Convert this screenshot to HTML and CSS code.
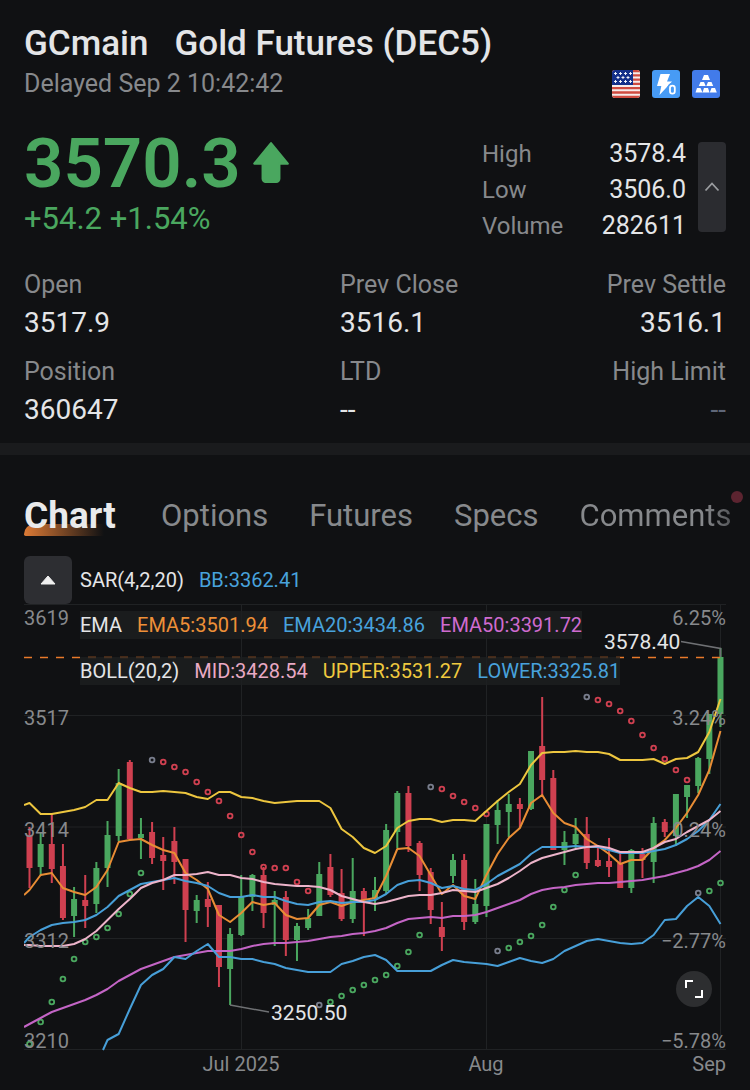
FILE: index.html
```html
<!DOCTYPE html>
<html lang="en">
<head>
<meta charset="utf-8">
<meta name="viewport" content="width=device-width, initial-scale=1">
<title>GCmain Gold Futures</title>
<link rel="stylesheet" href="styles.css">
</head>
<body>
<header class="quote">
  <h1 class="title"><span>GCmain</span><span>Gold Futures (DEC5)</span></h1>
  <div class="subline">
    <span>Delayed Sep 2 10:42:42</span>
    <div class="badges">
      <svg class="badge" viewBox="0 0 28 28" aria-label="United States">
        <clipPath id="flagclip"><rect width="28" height="28" rx="3"/></clipPath>
        <g clip-path="url(#flagclip)">
          <rect width="28" height="28" fill="#f6eceb"/>
          <path d="M0 1h28M0 5.3h28M0 9.6h28M0 13.9h28M0 18.2h28M0 22.5h28M0 26.8h28" stroke="#cf4b40" stroke-width="2.3"/>
          <rect width="21" height="15" fill="#14308a"/>
          <path d="M2 3.5h3M7 3.5h3M12 3.5h3M17 3.5h3M4.500 7.500h3M9.500 7.500h3M14.500 7.500h3M2 11.500h3M7 11.500h3M12 11.500h3M17 11.500h3M3.500 2v3M8.500 2v3M13.500 2v3M18.500 2v3M6 6v3M11 6v3M16 6v3M3.500 10v3M8.500 10v3M13.500 10v3M18.500 10v3" stroke="#fff" stroke-width=".9"/>
        </g>
      </svg>
      <svg class="badge" viewBox="0 0 28 28" aria-label="Level 0">
        <rect width="28" height="28" rx="3" fill="#479bf5"/>
        <path d="M8.500 4H18l-3 7.500h5L7.500 25l1.800-9H5z" fill="#fff"/>
        <rect x="17.700" y="15.500" width="5.200" height="8.400" rx="2.600" fill="#479bf5" stroke="#479bf5" stroke-width="5"/>
        <rect x="18" y="15.700" width="4.800" height="8" rx="2.400" fill="none" stroke="#fff" stroke-width="1.800"/>
      </svg>
      <svg class="badge" viewBox="0 0 28 28" aria-label="Gold">
        <rect width="28" height="28" rx="3" fill="#427bea"/>
        <path d="M12 5h4l2 5h-8zM8.500 12h3.500l1.700 4H6.800zM16 12h3.500l1.700 4h-6.900zM5 18h3.500l2 4.500H3.500zM12 18h4l1.500 4.500h-7zM19.500 18H23l1.800 4.500h-7z" fill="#fff"/>
      </svg>
    </div>
  </div>

  <div class="summary">
    <div class="last">
      <div class="price">3570.3
        <svg class="arrow" viewBox="0 0 36 40" aria-label="up"><path d="M18 2 34 21.500H26V36a3 3 0 0 1-3 3H13a3 3 0 0 1-3-3V21.500H2z" fill="#4aa75f" stroke="#4aa75f" stroke-width="2" stroke-linejoin="round"/></svg>
      </div>
      <div class="change">+54.2 +1.54%</div>
    </div>
    <dl class="stats">
      <dt>High</dt><dd>3578.4</dd>
      <dt>Low</dt><dd>3506.0</dd>
      <dt>Volume</dt><dd>282611</dd>
    </dl>
    <button class="collapse" type="button" aria-label="Collapse details">
      <svg viewBox="0 0 16 10"><path d="M1.500 8.500 8 1.500l6.500 7" fill="none" stroke="#9b9da0" stroke-width="1.800"/></svg>
    </button>
  </div>

  <dl class="details">
    <div><dt>Open</dt><dd>3517.9</dd></div>
    <div><dt>Prev Close</dt><dd>3516.1</dd></div>
    <div><dt>Prev Settle</dt><dd>3516.1</dd></div>
    <div><dt>Position</dt><dd>360647</dd></div>
    <div><dt>LTD</dt><dd>--</dd></div>
    <div><dt>High Limit</dt><dd class="muted">--</dd></div>
  </dl>
</header>

<main class="panel">
  <nav class="tabs" role="tablist">
    <button class="tab active" type="button" role="tab" aria-selected="true">Chart</button>
    <button class="tab" type="button" role="tab">Options</button>
    <button class="tab" type="button" role="tab">Futures</button>
    <button class="tab" type="button" role="tab">Specs</button>
    <button class="tab comments" type="button" role="tab">Comments</button>
  </nav>

  <div class="sar">
    <button class="fold" type="button" aria-label="Fold indicators"><svg viewBox="0 0 16 10"><path d="M1 9 8 1l7 8z" fill="#f0f0f0" stroke="#f0f0f0" stroke-linejoin="round"/></svg></button>
    <p class="legend"><span>SAR(4,2,20)</span><span class="blue">BB:3362.41</span></p>
  </div>
  <div class="chart">
    <svg id="plot" class="plot" viewBox="24 604 702 472" role="img" aria-label="Daily price chart"></svg>
    <div class="overlays">
      <p class="legend shaded"><span>EMA</span><span class="orange">EMA5:3501.94</span><span class="blue">EMA20:3434.86</span><span class="purple">EMA50:3391.72</span></p>
      <p class="legend shaded"><span>BOLL(20,2)</span><span class="pink">MID:3428.54</span><span class="yellow">UPPER:3531.27</span><span class="blue">LOWER:3325.81</span></p>
    </div>
    <button class="expand" type="button" aria-label="Full screen"><svg viewBox="0 0 18 18"><path d="M1 8V1h7M17 10v7h-7" fill="none" stroke="#fff" stroke-width="2"/></svg></button>
  </div>
</main>
<script src="chart.js"></script>
</body>
</html>
```
FILE: styles.css
```css
* { box-sizing: border-box; }
body {
  margin: 0;
  background: #101113;
  color: #e4e5e7;
  font-family: Roboto, "Noto Sans", sans-serif;
  font-size: 24px;
}
h1, p, dl, dd { margin: 0; }
button { border: 0; padding: 0; background: none; color: inherit; font: inherit; }
svg { display: block; }

.quote { padding: 22px 24px 13px; border-bottom: 12px solid #1a1b1d; }
.title { display: flex; gap: 26px; font-size: 35px; font-weight: 500; line-height: 44px; }
.subline { display: flex; justify-content: space-between; align-items: center; font-size: 25px; line-height: 36px; color: #87898c; }
.badges { display: flex; gap: 12px; padding-right: 6px; }
.badge { width: 28px; height: 28px; }

.summary { display: flex; align-items: flex-start; margin-top: 34px; }
.last { flex: 1; color: #4aa75f; }
.price { display: flex; align-items: center; gap: 11px; font-size: 69px; font-weight: 600; line-height: 56px; }
.arrow { width: 38px; height: 42px; margin-bottom: 4px; }
.change { margin-top: 5px; font-size: 31px; line-height: 44px; }
.stats { display: grid; grid-template-columns: 1fr auto; width: 204px; line-height: 36px; }
dt { color: #87898c; }
.stats dd { text-align: right; font-size: 25px; }
.collapse { display: grid; place-items: center; width: 28px; height: 90px; margin: 6px 0 0 12px; border-radius: 4px; background: #2b2c30; }
.collapse svg { width: 16px; height: 10px; }

.details { display: grid; grid-template-columns: 316fr 230fr 156fr; row-gap: 11px; margin-top: 23px; }
.details dt { font-size: 25px; line-height: 36px; white-space: nowrap; }
.details dd { font-size: 28px; line-height: 40px; }
.details div:nth-child(3n) { text-align: right; }
.details .muted { color: #5f6778; }

.panel { position: relative; padding: 35px 24px 12px; }
.panel::after { content: ""; position: absolute; top: 36px; right: 7px; width: 12px; height: 12px; border-radius: 50%; background: #5c2430; }
.tabs { display: flex; gap: 41px; margin-right: -24px; line-height: 52px; font-size: 31px; color: #87898c; overflow: hidden; }
.tab { position: relative; z-index: 0; flex: none; }
.tab.active { min-width: 96px; text-align: left; color: #e9eaeb; font-size: 37px; font-weight: 700; }
.tab.active::before { content: ""; position: absolute; z-index: -1; left: 0; bottom: 6px; width: 80px; height: 12px; border-radius: 12px 0 0 2px; background: linear-gradient(90deg, #dc7a35, #dc7a3500); }
.tab.comments { background: linear-gradient(90deg, #87898c 82%, #55575a); background-clip: text; color: transparent; }

.sar { display: flex; align-items: center; gap: 8px; margin-top: 14px; }
.fold { display: grid; place-items: center; width: 48px; height: 48px; border-radius: 6px; background: #2d2e32; }
.fold svg { width: 16px; height: 10px; }
.legend { display: flex; gap: 15px; width: max-content; font-size: 20px; line-height: 28px; }
.blue { color: #48a2dc; }
.orange { color: #ee9038; }
.purple { color: #cf6bcf; }
.pink { color: #e9a9c4; }
.yellow { color: #efc93f; }

.chart { position: relative; }
.plot { width: 100%; height: auto; }
.overlays { position: absolute; left: 56px; top: 7px; display: grid; gap: 18px; }
.shaded { background: rgba(29, 31, 33, .8); }
.expand { position: absolute; right: 14px; top: 367px; display: grid; place-items: center; width: 36px; height: 36px; border-radius: 50%; background: #2d2e30; }
.expand svg { width: 18px; height: 18px; }

.grid { stroke: #202224; }
.last-line { fill: none; stroke: #e87a2a; stroke-width: 1.5; stroke-dasharray: 8 8; }
.up { fill: #4aa75f; }
.down { fill: #cf4050; }
.line { fill: none; stroke-width: 2; stroke-linejoin: round; }
.line-yellow { stroke: #edc63f; }
.line-orange { stroke: #e88d35; }
.line-blue { stroke: #479fd8; }
.line-pink { stroke: #edb4ca; }
.line-purple { stroke: #c465c6; }
.dot { fill: none; stroke-width: 1.8; }
.dot-up { stroke: #4aa75f; }
.dot-down { stroke: #cf4050; }
.dot-start { stroke: #787d8c; }
.axis { fill: #87898c; font-size: 20px; }
.callout { fill: #e4e5e7; font-size: 21px; }
.leader { fill: none; stroke: #6f7174; stroke-width: 1.5; }
```
FILE: chart.js
```js
const plot = document.getElementById("plot");
const step = 11.145;
const x = i => 29.5 + i * step;

function add(tag, attrs, text) {
  const node = document.createElementNS("http://www.w3.org/2000/svg", tag);
  for (const key in attrs) node.setAttribute(key, attrs[key]);
  if (text) node.textContent = text;
  plot.appendChild(node);
}

// direction, high, body top, body bottom, low
const candles = `d 827 835 868 888|u 832 844 867 876|d 814 844 869 883|d 844 866 918 920|u 887 899 916 937|d 875 900 906 928|u 862 868 904 913|u 821 835 868 887|u 769 783 836 841|d 760 762 839 840|u 818 834 838 859|d 822 832 858 864|d 837 855 861 890|d 827 841 862 884|d 859 859 910 942|u 895 900 911 923|d 882 899 907 927|d 905 905 967 987|u 928 934 969 1005|u 875 896 935 936|u 874 875 897 911|d 867 875 913 928|u 891 900 905 946|d 891 897 940 956|u 923 926 940 961|u 909 918 928 930|u 862 874 916 916|d 854 867 895 897|d 869 893 919 921|u 858 891 919 923|d 888 891 900 936|u 877 890 899 911|u 824 830 891 893|u 791 793 832 848|d 786 793 846 852|d 841 843 875 891|d 868 872 910 924|d 902 927 937 951|u 854 860 876 883|d 854 860 922 930|u 879 904 922 924|u 824 824 906 917|u 800 810 825 844|u 794 804 812 837|d 798 804 809 828|u 751 751 809 810|d 697 746 780 795|d 770 778 850 850|u 831 842 850 865|u 818 834 844 848|d 817 834 863 869|d 848 860 866 867|d 838 861 867 877|d 853 863 888 888|u 849 850 888 893|d 848 854 860 878|u 817 823 862 883|d 819 822 832 837|u 794 794 836 846|u 785 785 797 818|u 757 758 786 793|u 714 714 759 774|u 648 657 714 727`;

// each series starts at the left edge of the plot, then has one value per candle
const series = {
  purple: "1027 1024 1018 1012 1008 1004 1000 995 989 981 975 969 965 961 957 955 953 951 951 951 949 946 944 943 943 942 941 939 937 936 934 933 931 928 923 919 918 917 918 916 916 915 912 908 904 900 894 890 888 887 885 884 883 883 882 881 880 878 876 873 870 866 860 851",
  orange: "895 890 875 873 888 892 895 887 870 842 840 839 845 850 853 873 880 889 915 922 913 902 905 903 915 919 918 905 902 906 902 900 898 876 849 848 856 875 894 885 896 899 875 854 838 828 803 795 813 823 827 839 846 854 864 860 860 848 840 828 813 795 770 731",
  yellow: "805 803 814 814 812 810 807 800 800 783 788 792 792 791 792 793 797 799 792 792 797 798 801 803 802 801 801 801 808 829 837 848 853 846 828 821 819 819 822 820 820 821 811 801 792 784 765 753 752 752 751 752 752 754 760 760 760 759 764 759 758 752 732 699",
  blue: "943 937 930 925 923 922 920 915 907 896 890 884 882 880 878 881 883 886 893 897 897 895 897 897 901 904 905 902 901 903 902 902 900 894 885 881 880 883 888 886 889 890 884 876 870 864 854 847 847 847 846 847 847 850 853 853 853 851 849 845 839 831 820 804",
  pink: "945 945 946 946 946 944 939 931 920 909 899 888 883 880 875 875 874 872 875 875 878 879 882 884 885 886 886 887 890 896 899 902 904 902 899 896 895 895 893 890 891 892 888 884 878 871 863 858 855 852 849 847 846 848 852 852 852 848 842 839 832 826 820 811"
};
const lower = "1040 1034 1009 985 975 969 957 959 951 944 957 957 959 959 962 964 968 970 972 972 972 964 961 957 955 960 971 971 971 971 965 960 962 963 964 966 962 958 961 963 959 951 946 941 939 941 943 944 943 935 920 919 906 897 906 924";

const sar = "u1044 u1022 u1002 u979 u959 u942 u937 u928 u914 u894 u873 s760 d762 d767 d772 d782 d792 d801 d816 d835 d852 d867 d868 d868 d882 d891 s1005 u1002 u996 u990 u985 u980 u975 u966 u952 u935 s787 d789 d796 d802 d808 d814 s951 u948 u942 u936 u925 u907 u890 u875 s697 d700 d704 d711 d721 d735 d748 d759 d770 d780 s893 u891 u883";

for (const y of [604.5, 715.5, 827, 938.5, 1049.5]) add("path", { class: "grid", d: `M24 ${y}H726` });
for (const gx of [241.5, 486.5, 720.5]) add("path", { class: "grid", d: `M${gx} 604V1050` });

candles.split("|").forEach((row, i) => {
  const [dir, high, top, bottom, low] = row.split(" ");
  const cls = dir === "u" ? "up" : "down";
  add("rect", { class: cls, x: x(i) - 1, y: high, width: 2, height: low - high });
  add("rect", { class: cls, x: x(i) - 3, y: top, width: 6, height: bottom - top });
});
add("path", { class: "last-line", d: "M24 657.5H720" });

const kinds = { u: "dot-up", d: "dot-down", s: "dot-start" };
sar.split(" ").forEach((v, i) => add("circle", { class: "dot " + kinds[v[0]], cx: x(i), cy: v.slice(1), r: 2.4 }));

for (const name in series) {
  const points = series[name].split(" ").map((y, i) => `${i ? x(i - 1) : 24},${y}`).join(" ");
  add("polyline", { class: "line line-" + name, points });
}
add("polyline", { class: "line line-blue", points: "103,1050 " + lower.split(" ").map((y, i) => `${x(i + 7)},${y}`).join(" ") });

[["3619", 625], ["3517", 725], ["3414", 837], ["3312", 948], ["3210", 1048]].forEach(([t, y]) => add("text", { class: "axis", x: 24, y }, t));
[["6.25%", 625], ["3.24%", 725], ["0.24%", 837], ["−2.77%", 948], ["−5.78%", 1048], ["Sep", 1071]].forEach(([t, y]) => add("text", { class: "axis", x: 726, y, "text-anchor": "end" }, t));
add("text", { class: "axis", x: 241, y: 1071, "text-anchor": "middle" }, "Jul 2025");
add("text", { class: "axis", x: 486, y: 1071, "text-anchor": "middle" }, "Aug");

add("path", { class: "leader", d: "M681 641.500 720.500 648.500V657M230 1005 269 1012" });
add("text", { class: "callout", x: 604, y: 649 }, "3578.40");
add("text", { class: "callout", x: 271, y: 1020 }, "3250.50");
```
